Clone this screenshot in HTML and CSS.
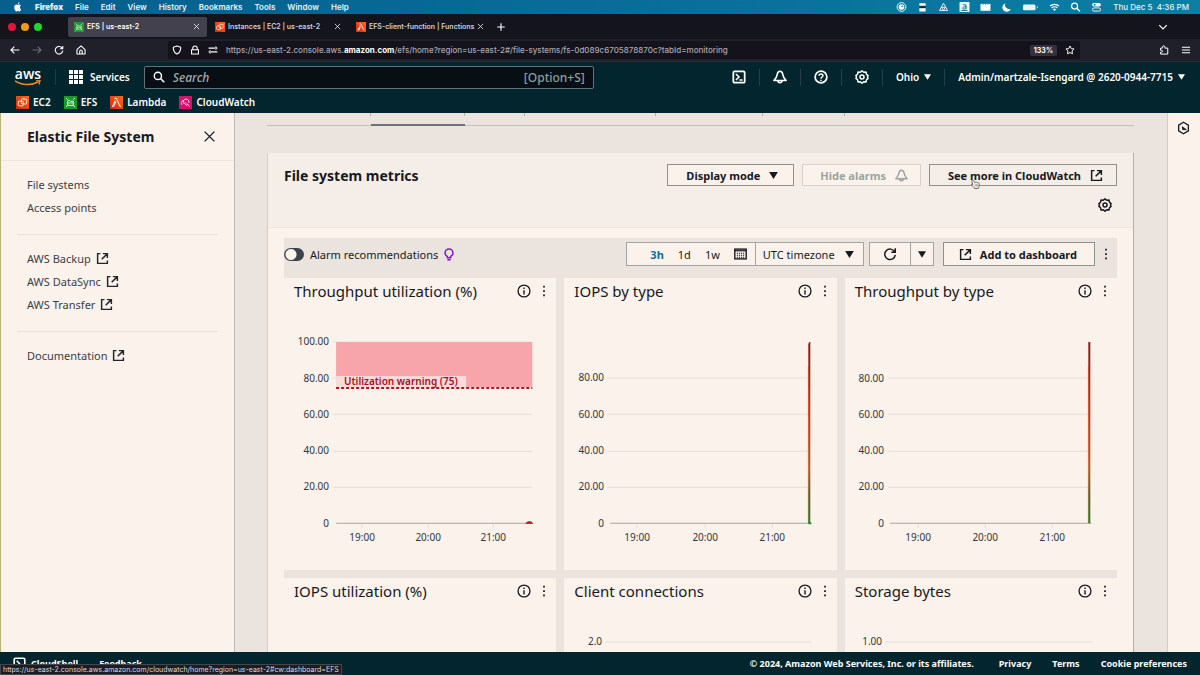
FILE: index.html
```html
<!DOCTYPE html>
<html lang="en">
<head>
    <meta charset="UTF-8">
    <meta name="viewport" content="width=device-width, initial-scale=1.0">
    <title>EFS | us-east-2</title>
    <link rel="stylesheet" href="styles.css">
</head>
<body>
    <!-- shared icons -->
    <svg class="sprite" aria-hidden="true">
        <defs>
            <linearGradient id="spike" x1="0" y1="0" x2="0" y2="1">
                <stop offset="0" stop-color="#8c1a12"/>
                <stop offset="0.4" stop-color="#c2321c"/>
                <stop offset="0.7" stop-color="#b5582c"/>
                <stop offset="0.85" stop-color="#5c5a2c"/>
                <stop offset="1" stop-color="#2c7a2c"/>
            </linearGradient>
            <linearGradient id="orange" x1="0" y1="1" x2="1" y2="0">
                <stop offset="0" stop-color="#d6250c"/>
                <stop offset="1" stop-color="#ff6a1c"/>
            </linearGradient>
        </defs>
        <symbol id="ext" viewBox="0 0 16 16"><path d="M5.500 2H2v12h12v-3.500M8.500 2H14v5.500M14 2 7 9" fill="none" stroke="currentColor" stroke-width="1.800"/></symbol>
        <symbol id="caret" viewBox="0 0 10 8"><path d="M0 0h10L5 8z" fill="currentColor"/></symbol>
        <symbol id="close" viewBox="0 0 16 16"><path d="M2 2l12 12M14 2 2 14" fill="none" stroke="currentColor" stroke-width="1.700"/></symbol>
        <symbol id="bell" viewBox="0 0 16 16"><path d="M8 1.500c-2.500 0-3 2-3.300 4C4.300 8.500 3.500 9.500 1 12h14c-2.500-2.500-3.300-3.500-3.700-6.500-.3-2-.8-4-3.300-4zM5.500 12a2.500 2.500 0 0 0 5 0" fill="none" stroke="currentColor" stroke-width="1.800" stroke-linejoin="round"/></symbol>
        <symbol id="gear" viewBox="0 0 16 16"><path d="M8 1l2 1.600 2.600-.2.500 2.500L15 6.500 14.200 8l.8 1.500-1.900 1.600-.5 2.500-2.600-.2L8 15l-2-1.600-2.600.2-.5-2.500L1 9.500 1.800 8 1 6.500l1.900-1.600.5-2.500 2.600.2z" fill="none" stroke="currentColor" stroke-width="1.700" stroke-linejoin="round"/><circle cx="8" cy="8" r="2.300" fill="none" stroke="currentColor" stroke-width="1.700"/></symbol>
        <symbol id="info" viewBox="0 0 16 16"><circle cx="8" cy="8" r="6.800" fill="none" stroke="currentColor" stroke-width="1.500"/><path d="M8 7v5M8 4v1.700" stroke="currentColor" stroke-width="1.600"/></symbol>
        <symbol id="dots" viewBox="0 0 4 16"><path d="M1 2h2v2H1zM1 7h2v2H1zM1 12h2v2H1z" fill="currentColor"/></symbol>
        <symbol id="shell" viewBox="0 0 16 16"><rect x="1.500" y="1.500" width="13" height="13" rx="1.500" fill="none" stroke="currentColor" stroke-width="2"/><path d="M4.500 4.500 8 8l-3.500 3.500M8.500 11.500h3.500" fill="none" stroke="currentColor" stroke-width="1.800"/></symbol>
        <symbol id="reload" viewBox="0 0 16 16"><path d="M14 1.500V6H9.500M13.300 5.500A6 6 0 1 0 14 9" fill="none" stroke="currentColor" stroke-width="1.700"/></symbol>
        <symbol id="search" viewBox="0 0 16 16"><circle cx="6.500" cy="6.500" r="4.800" fill="none" stroke="currentColor" stroke-width="1.900"/><path d="M10 10l5 5" stroke="currentColor" stroke-width="2.200"/></symbol>
        <symbol id="ec2" viewBox="0 0 16 16"><rect width="16" height="16" fill="url(#orange)"/><g fill="none" stroke="#fff" stroke-width="1" transform="rotate(8 8 8)"><rect x="3" y="6.500" width="6" height="6" rx="1"/><rect x="6.500" y="3.500" width="6.500" height="6" rx="1"/></g></symbol>
        <symbol id="efs" viewBox="0 0 16 16"><rect width="16" height="16" fill="#1b9a2b"/><path d="M2.500 2.500l2.500 2.500M13.500 2.500 11 5M2.500 13.500 5 11M13.500 13.500 11 11M5 5.500h2l1 1h3.500v5h-7v-5zM4.500 8.500h7" fill="none" stroke="#fff" stroke-width="1"/></symbol>
        <symbol id="lambda" viewBox="0 0 16 16"><rect width="16" height="16" fill="url(#orange)"/><path d="M5.500 3h2.500l4 9.500H13.500M7.300 7 4.500 13H3l3.500-7.500" fill="none" stroke="#fff" stroke-width="1.200"/></symbol>
        <symbol id="cw" viewBox="0 0 16 16"><rect width="16" height="16" fill="#d6106c"/><path d="M12 8.500A3.500 3.500 0 1 0 6 9.500M3.500 11C2.500 9 3 6.500 5 5M9.500 9l3.500 4M8 7.500a2 2 0 1 0 3 2.500" fill="none" stroke="#fff" stroke-width="1"/></symbol>
    </svg>

    <div class="menubar">
        <svg class="apple" viewBox="0 0 14 16"><path d="M10 8.500c0-2 1.600-2.800 1.700-2.900C10.700 4.200 9.300 4 8.700 4c-1 0-1.500.6-2 .6S5.300 4 4.500 4C2.600 4 1 5.600 1 8.600 1 11.800 3.200 15 4.600 15c.8 0 1.200-.5 2.200-.5s1.300.5 2.100.5c1.300 0 2.700-2.300 3.100-3.500-1.300-.5-2-1.600-2-3zM8.500 2.700C9 2 9.300 1.200 9.200.5c-1.400.1-2.600 1.300-2.500 3 .8 0 1.400-.3 1.800-.8z" fill="#fff"/></svg>
        <b>Firefox</b><span>File</span><span>Edit</span><span>View</span><span>History</span><span>Bookmarks</span><span>Tools</span><span>Window</span><span>Help</span>
        <div class="tray">
            <svg viewBox="0 0 16 16"><circle cx="8" cy="8" r="7" fill="none" stroke="#fff" stroke-width="1.500"/><circle cx="8" cy="8" r="4.500" fill="#fff"/><circle cx="9" cy="7" r="1.300" fill="#0b6b96"/></svg>
            <svg viewBox="0 0 16 16"><path d="M3 2h10v4H3zM3 10h10v5H3z" fill="#fff"/><path d="M3 8h10" stroke="#032b40" stroke-width="3"/></svg>
            <svg viewBox="0 0 16 16"><path d="M8 2 1.500 13.500h13zM5 8.500h6M5 8.500l3 5 3-5" fill="none" stroke="#fff" stroke-width="1.400"/></svg>
            <svg viewBox="0 0 16 16"><rect width="16" height="16" rx="1" fill="#e8f3f8"/><path d="M5.500 5c2-1.500 5-1 5 1v5M10.500 7.500c-6-.5-6.500 4-3 4 1.500 0 3-1 3-2.500M3 13.500h10" fill="none" stroke="#0b6b96" stroke-width="1.500"/></svg>
            <svg viewBox="0 0 16 16"><path d="M0 3h16v11H0z" fill="#fff"/><path d="M4 3v2M8 3v2M12 3v2" stroke="#0b6b96"/></svg>
            <svg viewBox="0 0 16 16"><path d="M6 2a7 7 0 1 0 9 9A7 7 0 0 1 6 2z" fill="#fff"/></svg>
            <svg class="wide" viewBox="0 0 26 16"><rect x="1" y="4" width="20" height="9" rx="2" fill="#e6f4fa"/><path d="M24 7v3" stroke="#9fd0e6" stroke-width="2"/></svg>
            <svg viewBox="0 0 16 16"><path d="M1 6.500a10 10 0 0 1 14 0M3.500 9.500a6.500 6.500 0 0 1 9 0" fill="none" stroke="#fff" stroke-width="2"/><path d="M5.500 11.500 8 14.500l2.500-3a4 4 0 0 0-5 0z" fill="#fff"/></svg>
            <svg><use href="#search"/></svg>
            <svg viewBox="0 0 16 16"><rect x="1" y="1.500" width="14" height="5.500" rx="2.700" fill="#fff"/><rect x="1.500" y="9.500" width="13" height="5" rx="2.500" fill="none" stroke="#fff" stroke-width="1.400"/><circle cx="5" cy="4.300" r="1.600" fill="#0b7aa3"/></svg>
            <span class="clock">Thu Dec 5&nbsp; 4:36 PM</span>
        </div>
    </div>

    <div class="tabstrip">
        <div class="lights"><i class="red"></i><i class="yellow"></i><i class="green"></i></div>
        <div class="tab active"><svg class="fav"><use href="#efs"/></svg><span>EFS | us-east-2</span><button aria-label="Close tab"><svg><use href="#close"/></svg></button></div>
        <div class="tab"><svg class="fav"><use href="#ec2"/></svg><span>Instances | EC2 | us-east-2</span><button aria-label="Close tab"><svg><use href="#close"/></svg></button></div>
        <div class="tab"><svg class="fav"><use href="#lambda"/></svg><span>EFS-client-function | Functions</span><button aria-label="Close tab"><svg><use href="#close"/></svg></button></div>
        <button class="new-tab" aria-label="New tab"><svg viewBox="0 0 16 16"><path d="M8 2v12M2 8h12" stroke="#fff" stroke-width="1.800"/></svg></button>
        <button class="all-tabs" aria-label="List all tabs"><svg viewBox="0 0 16 16"><path d="M2 5l6 6 6-6" fill="none" stroke="#fff" stroke-width="2"/></svg></button>
    </div>

    <div class="navbar">
        <div class="nav-buttons">
            <button aria-label="Back"><svg viewBox="0 0 16 16"><path d="M15 8H2M7 2.500 1.500 8 7 13.500" fill="none" stroke="#fff" stroke-width="1.800"/></svg></button>
            <button aria-label="Forward"><svg viewBox="0 0 16 16"><path d="M1 8h13M9 2.500 14.500 8 9 13.500" fill="none" stroke="#6b6a75" stroke-width="1.800"/></svg></button>
            <button aria-label="Reload"><svg><use href="#reload"/></svg></button>
            <button aria-label="Home"><svg viewBox="0 0 16 16"><path d="M1.500 7.500 8 1.500l6.500 6V14.500h-13zM6 14v-4a2 2 0 0 1 4 0v4" fill="none" stroke="#fff" stroke-width="1.700" stroke-linejoin="round"/></svg></button>
        </div>
        <div class="urlbar">
            <svg viewBox="0 0 16 16"><path d="M8 1.500 14 3.500c0 6-2 9-6 11-4-2-6-5-6-11z" fill="none" stroke="#fff" stroke-width="1.700" stroke-linejoin="round"/></svg>
            <svg viewBox="0 0 16 16"><path d="M2.500 7.500h11v7h-11zM4.500 7V5a3.500 3.500 0 0 1 7 0v2" fill="none" stroke="#fff" stroke-width="1.700"/></svg>
            <svg viewBox="0 0 16 16"><path d="M1 5h9M6 11h9" stroke="#fff" stroke-width="1.800"/><circle cx="12.500" cy="5" r="1.800" fill="none" stroke="#fff" stroke-width="1.500"/><circle cx="3.500" cy="11" r="1.800" fill="none" stroke="#fff" stroke-width="1.500"/></svg>
            <span class="url">https://us-east-2.console.aws.<b>amazon.com</b>/efs/home?region=us-east-2#/file-systems/fs-0d089c6705878870c?tabId=monitoring</span>
            <span class="zoom">133%</span>
            <svg viewBox="0 0 16 16"><path d="M8 1.500l2 4.200 4.500.6-3.300 3.200.8 4.600L8 12l-4 2.100.8-4.600L1.500 6.300 6 5.700z" fill="none" stroke="#fff" stroke-width="1.500" stroke-linejoin="round"/></svg>
        </div>
        <button aria-label="Extensions"><svg viewBox="0 0 16 16"><path d="M5.500 5V3.500a2 2 0 0 1 4 0V5H14v9.500H2.500v-3H4a1.500 1.500 0 0 0 0-3H2.500V5z" fill="none" stroke="#fff" stroke-width="1.600" stroke-linejoin="round"/></svg></button>
        <button aria-label="Menu"><svg viewBox="0 0 16 16"><path d="M1.500 3.500h13M1.500 8h13M1.500 12.500h13" stroke="#fff" stroke-width="1.700"/></svg></button>
    </div>

    <header class="aws-header">
        <div class="aws-row">
            <div class="aws-logo"><b>aws</b><svg viewBox="0 0 28 6"><path d="M1 .8c7 4.700 17 4.700 23.500 1" fill="none" stroke="#f08a24" stroke-width="1.600"/><path d="M22 .8l4-.1-1 4" fill="none" stroke="#f08a24" stroke-width="1.300"/></svg></div>
            <i class="sep"></i>
            <button class="services"><svg viewBox="0 0 14 14"><path d="M0 0h4v4H0zM5 0h4v4H5zM10 0h4v4h-4zM0 5h4v4H0zM5 5h4v4H5zM10 5h4v4h-4zM0 10h4v4H0zM5 10h4v4H5zM10 10h4v4h-4z" fill="#fff"/></svg>Services</button>
            <label class="searchbox"><svg><use href="#search"/></svg><input type="text" placeholder="Search" aria-label="Search"><span>[Option+S]</span></label>
            <nav class="tools">
                <button aria-label="CloudShell"><svg><use href="#shell"/></svg></button>
                <button aria-label="Notifications"><svg><use href="#bell"/></svg></button>
                <button aria-label="Help"><svg viewBox="0 0 16 16"><circle cx="8" cy="8" r="6.700" fill="none" stroke="#fff" stroke-width="2"/><path d="M5.800 6.500C5.800 3.800 10.200 3.800 10.200 6.500 10.200 8 8 8 8 10M8 11v1.600" fill="none" stroke="#fff" stroke-width="1.700"/></svg></button>
                <button aria-label="Settings"><svg><use href="#gear"/></svg></button>
                <button class="region">Ohio<svg class="caret"><use href="#caret"/></svg></button>
                <button class="account">Admin/martzale-Isengard @ 2620-0944-7715<svg class="caret"><use href="#caret"/></svg></button>
            </nav>
        </div>
        <nav class="favorites">
            <a href="#"><svg><use href="#ec2"/></svg>EC2</a>
            <a href="#"><svg><use href="#efs"/></svg>EFS</a>
            <a href="#"><svg><use href="#lambda"/></svg>Lambda</a>
            <a href="#"><svg><use href="#cw"/></svg>CloudWatch</a>
        </nav>
    </header>

    <div class="page">
        <aside class="sidebar">
            <div class="sidebar-title"><h2>Elastic File System</h2><button aria-label="Close navigation"><svg><use href="#close"/></svg></button></div>
            <ul>
                <li><a href="#">File systems</a></li>
                <li><a href="#">Access points</a></li>
            </ul>
            <ul>
                <li><a href="#">AWS Backup<svg><use href="#ext"/></svg></a></li>
                <li><a href="#">AWS DataSync<svg><use href="#ext"/></svg></a></li>
                <li><a href="#">AWS Transfer<svg><use href="#ext"/></svg></a></li>
            </ul>
            <ul>
                <li><a href="#">Documentation<svg><use href="#ext"/></svg></a></li>
            </ul>
        </aside>

        <main class="content">
            <!-- bottom edge of the details tabs, scrolled under the header -->
            <div class="detail-tabs"><i class="w1"></i><i class="w2 on"></i><i class="w3"></i><i class="w4"></i><i class="w5"></i><i class="w6"></i><i class="rest"></i></div>

            <section class="card">
                <div class="card-header">
                    <h2>File system metrics</h2>
                    <div class="card-actions">
                        <div class="buttons">
                            <button class="btn menu">Display mode<svg class="caret"><use href="#caret"/></svg></button>
                            <button class="btn" disabled>Hide alarms<svg><use href="#bell"/></svg></button>
                            <button class="btn hover">See more in CloudWatch<svg><use href="#ext"/></svg>
                                <svg class="pointer" viewBox="0 0 16 16"><path d="M3 2.500c1-1 2 0 2.500 1L7 6c2-1 3 0 4-.2 1.500 0 2.500 1 2.500 2.500v2c0 2-1.500 2.500-1.500 4.200H6.500C6 12.500 3.500 11 2 9.500c-.6-1 .6-1.800 2-.8L2.500 4z" fill="#f5ede8" stroke="#555" stroke-width="1.200"/><path d="M7.500 8.500v3M9.500 8.500v3M11.300 8.500v3" stroke="#777" stroke-width="1"/></svg>
                            </button>
                        </div>
                        <button class="icon-btn" aria-label="Preferences"><svg><use href="#gear"/></svg></button>
                    </div>
                </div>

                <div class="metrics">
                    <div class="toolbar">
                        <label class="switch"><input type="checkbox" role="switch">Alarm recommendations</label>
                        <svg class="bulb" viewBox="0 0 12 16"><path d="M4 10.500C2 9.500 1.200 8 1.200 6a4.800 4.800 0 0 1 9.600 0c0 2-.8 3.500-2.800 4.500v1.500H4z" fill="none" stroke="#7d1fc0" stroke-width="1.900"/><path d="M4 14.500h4" stroke="#7d1fc0" stroke-width="2"/></svg>
                        <div class="group range">
                            <div class="times"><button class="on">3h</button><button>1d</button><button>1w</button><button aria-label="Custom range"><svg viewBox="0 0 16 14"><rect x="1" y="1" width="14" height="12" fill="none" stroke="currentColor" stroke-width="1.700"/><path d="M1 3h14" stroke="currentColor" stroke-width="1.500"/><path d="M3.500 6h9M3.500 8.500h9M3.500 11h9" stroke="currentColor" stroke-width="1.300" stroke-dasharray="1.500 1"/></svg></button></div>
                            <label class="tz"><select aria-label="Timezone"><option>UTC timezone</option></select><svg class="caret"><use href="#caret"/></svg></label>
                        </div>
                        <div class="group refresh">
                            <button aria-label="Refresh"><svg><use href="#reload"/></svg></button>
                            <button aria-label="Refresh options"><svg class="caret"><use href="#caret"/></svg></button>
                        </div>
                        <button class="btn add"><svg><use href="#ext"/></svg>Add to dashboard</button>
                        <button class="icon-btn more" aria-label="More"><svg class="dots"><use href="#dots"/></svg></button>
                    </div>

                    <div class="charts">
                        <article class="panel">
                            <div class="panel-title"><h3>Throughput utilization (%)</h3><button aria-label="Info"><svg><use href="#info"/></svg></button><button aria-label="Actions"><svg class="dots"><use href="#dots"/></svg></button></div>
                            <svg class="chart" viewBox="0 0 272 264">
                                <path class="grid" d="M49 36h199M49 72h199M49 108h199M49 145h199M49 181h199"/>
                                <rect x="52" y="36" width="196" height="45" fill="#f7a5aa"/>
                                <rect x="52" y="70" width="130" height="11" fill="#f8dcda"/>
                                <text class="warn" x="60" y="79">Utilization warning (75)</text>
                                <path d="M52 82h196" stroke="#b8141c" stroke-width="2" stroke-dasharray="3 2"/>
                                <path class="axis" d="M52 217h196"/><path class="grid" d="M78 218v4M144 218v4M209 218v4"/>
                                <path d="M242 217c1-2 5-2 6 0z" fill="#b8141c" stroke="#b8141c"/>
                                <g class="y"><text x="45" y="39">100.00</text><text x="45" y="76">80.00</text><text x="45" y="112">60.00</text><text x="45" y="148">40.00</text><text x="45" y="184">20.00</text><text x="45" y="221">0</text></g>
                                <g class="x"><text x="78" y="235">19:00</text><text x="144" y="235">20:00</text><text x="209" y="235">21:00</text></g>
                            </svg>
                        </article>
                        <article class="panel">
                            <div class="panel-title"><h3>IOPS by type</h3><button aria-label="Info"><svg><use href="#info"/></svg></button><button aria-label="Actions"><svg class="dots"><use href="#dots"/></svg></button></div>
                            <svg class="chart" viewBox="0 0 272 264">
                                <path class="grid" d="M43 72h202M43 108h202M43 145h202M43 181h202"/>
                                <path class="axis" d="M46 217h201"/><path class="grid" d="M73 218v4M141 218v4M208 218v4"/>
                                <path d="M244 217V60" stroke="#f3b56f" stroke-width="1"/>
                                <path d="M244 217V38l1-2h1v181z" fill="url(#spike)"/><path d="M244 217h3" stroke="#2c8a2c" stroke-width="2"/>
                                <g class="y"><text x="40" y="75">80.00</text><text x="40" y="112">60.00</text><text x="40" y="148">40.00</text><text x="40" y="184">20.00</text><text x="40" y="221">0</text></g>
                                <g class="x"><text x="73" y="235">19:00</text><text x="141" y="235">20:00</text><text x="208" y="235">21:00</text></g>
                            </svg>
                        </article>
                        <article class="panel">
                            <div class="panel-title"><h3>Throughput by type</h3><button aria-label="Info"><svg><use href="#info"/></svg></button><button aria-label="Actions"><svg class="dots"><use href="#dots"/></svg></button></div>
                            <svg class="chart" viewBox="0 0 272 264">
                                <path class="grid" d="M43 72h202M43 108h202M43 145h202M43 181h202"/>
                                <path class="axis" d="M45 217h201"/><path class="grid" d="M73 218v4M140 218v4M207 218v4"/>
                                <path d="M243 217V60" stroke="#f3b56f" stroke-width="1"/>
                                <path d="M243 217V36h2v181z" fill="url(#spike)"/>
                                <g class="y"><text x="39" y="76">80.00</text><text x="39" y="112">60.00</text><text x="39" y="148">40.00</text><text x="39" y="184">20.00</text><text x="39" y="221">0</text></g>
                                <g class="x"><text x="73" y="235">19:00</text><text x="140" y="235">20:00</text><text x="207" y="235">21:00</text></g>
                            </svg>
                        </article>
                        <article class="panel">
                            <div class="panel-title"><h3>IOPS utilization (%)</h3><button aria-label="Info"><svg><use href="#info"/></svg></button><button aria-label="Actions"><svg class="dots"><use href="#dots"/></svg></button></div>
                        </article>
                        <article class="panel">
                            <div class="panel-title"><h3>Client connections</h3><button aria-label="Info"><svg><use href="#info"/></svg></button><button aria-label="Actions"><svg class="dots"><use href="#dots"/></svg></button></div>
                            <svg class="chart" viewBox="0 0 272 264"><path class="grid" d="M41 36h206"/><g class="y"><text x="38" y="39">2.0</text></g></svg>
                        </article>
                        <article class="panel">
                            <div class="panel-title"><h3>Storage bytes</h3><button aria-label="Info"><svg><use href="#info"/></svg></button><button aria-label="Actions"><svg class="dots"><use href="#dots"/></svg></button></div>
                            <svg class="chart" viewBox="0 0 272 264"><path class="grid" d="M41 36h207"/><g class="y"><text x="37" y="39">1.00</text></g></svg>
                        </article>
                    </div>
                </div>
            </section>
        </main>

        <div class="rail"><button aria-label="Open tools"><svg viewBox="0 0 16 16"><path d="M8 1l6 3.500v7L8 15l-6-3.500v-7z" fill="none" stroke="currentColor" stroke-width="1.600"/><path d="M6.500 6.500 11.500 10 7 10z" fill="currentColor" stroke="currentColor"/></svg></button></div>
    </div>

    <footer class="footer">
        <a href="#"><svg><use href="#shell"/></svg>CloudShell</a>
        <a href="#">Feedback</a>
        <span class="copy">© 2024, Amazon Web Services, Inc. or its affiliates.</span>
        <a href="#">Privacy</a>
        <a href="#">Terms</a>
        <a href="#">Cookie preferences</a>
    </footer>
    <div class="status">https://us-east-2.console.aws.amazon.com/cloudwatch/home?region=us-east-2#cw:dashboard=EFS</div>
</body>
</html>
```
FILE: styles.css
```css
* {
    margin: 0;
    padding: 0;
    box-sizing: border-box;
}

body {
    height: 100vh;
    display: flex;
    flex-direction: column;
    overflow: hidden;
    background: #fbf2ec;
    color: #16191f;
    font-family: "Noto Sans", sans-serif;
    font-size: 12px;
}

button,
input,
select {
    font: inherit;
    color: inherit;
    background: none;
    border: none;
    outline: none;
}

button {
    display: inline-flex;
    align-items: center;
    justify-content: center;
    cursor: pointer;
}

a {
    color: inherit;
    text-decoration: none;
}

ul {
    list-style: none;
}

svg {
    flex: none;
    display: block;
}

.sprite {
    position: absolute;
    width: 0;
    height: 0;
}

.caret {
    width: 9px;
    height: 7px;
}

/* mac menu bar */
.menubar {
    display: flex;
    align-items: center;
    gap: 12px;
    height: 14px;
    padding: 0 11px 0 13px;
    background: linear-gradient(to right, #065f8d, #0a6f9b 60%, #0b80a3);
    color: #e9f4f9;
    font: 600 8px Inter, sans-serif;
    white-space: nowrap;
}

.apple {
    width: 10px;
    height: 10px;
}

.tray {
    display: flex;
    align-items: center;
    gap: 10px;
    margin-left: auto;
}

.tray svg {
    width: 11px;
    height: 10px;
    color: #fff;
}

.tray .wide {
    width: 17px;
}

.clock {
    padding-left: 1px;
    font-weight: 500;
}

/* browser */
.tabstrip {
    display: flex;
    align-items: center;
    gap: 2px;
    height: 25px;
    padding: 0 32px 0 8px;
    background: #13141c;
    color: #cfcfd6;
    font: 600 7px Inter, sans-serif;
}

.lights {
    display: flex;
    gap: 5px;
    width: 58px;
}

.lights i {
    width: 8px;
    height: 8px;
    border-radius: 50%;
}

.red { background: #e6143c; }
.yellow { background: #f59a14; }
.green { background: #1fd62c; }

.tab {
    display: flex;
    align-items: center;
    gap: 3px;
    width: 139px;
    height: 20px;
    padding: 0 7px 0 6px;
    border-radius: 2px;
    white-space: nowrap;
}

.tab.active {
    background: #42414d;
    color: #fff;
}

.tab .fav {
    width: 10px;
    height: 10px;
}

.tab span {
    flex: 1;
}

.tab button svg {
    width: 7px;
    height: 7px;
    color: #fff;
}

.new-tab {
    margin-left: 5px;
}

.new-tab svg,
.all-tabs svg {
    width: 10px;
    height: 10px;
}

.all-tabs {
    margin-left: auto;
}

.navbar {
    display: flex;
    align-items: center;
    gap: 12px;
    height: 23px;
    padding: 0 9px;
    background: #1f2029;
    border-bottom: 1px solid #2c2a35;
    color: #fff;
}

.navbar svg {
    width: 10px;
    height: 10px;
}

.nav-buttons {
    display: flex;
    gap: 12px;
    width: 147px;
    padding-left: 1px;
}

.urlbar {
    display: flex;
    flex: 1;
    align-items: center;
    gap: 8px;
    height: 18px;
    margin-right: 67px;
    padding: 0 5px 0 4px;
    border-radius: 2px;
    background: #14131b;
}

.url {
    flex: 1;
    color: #a9a8b2;
    font: 500 8px Inter, sans-serif;
    white-space: nowrap;
}

.url b {
    color: #fff;
}

.zoom {
    padding: 1px 4px;
    border-radius: 2px;
    background: #35313f;
    font: 700 7px Inter, sans-serif;
}

/* aws header */
.aws-header {
    height: 51px;
    padding: 1px 14px 0 14px;
    background: #03252e;
    color: #fff;
    font-size: 10px;
    font-weight: 600;
}

.aws-row {
    display: flex;
    align-items: center;
    height: 28px;
}

.aws-logo {
    width: 28px;
    text-align: center;
    font: 600 14px/12px "Open Sans", sans-serif;
}

.aws-logo b {
    display: block;
    font-weight: 600;
}

.aws-logo svg {
    width: 28px;
    height: 6px;
}

.sep {
    width: 1px;
    height: 16px;
    margin: 0 13px;
    background: #1c3b45;
}

.services {
    gap: 7px;
}

.services svg {
    width: 14px;
    height: 14px;
}

.searchbox {
    display: flex;
    flex: 0 1 450px;
    align-items: center;
    gap: 8px;
    height: 23px;
    margin-left: 14px;
    padding: 0 8px;
    border: 1px solid #5f7378;
    border-radius: 2px;
    background: #070f15;
    font-size: 12px;
    font-weight: 500;
    color: #8f9e9e;
}

.searchbox svg {
    width: 12px;
    height: 12px;
    color: #fff;
}

.searchbox input {
    flex: 1;
    min-width: 0;
}

.searchbox input::placeholder {
    color: #a5abab;
    font-style: italic;
}

.tools {
    display: flex;
    align-items: center;
    margin-left: auto;
}

.tools button {
    height: 17px;
    padding: 0 13px;
    border-left: 1px solid #23404a;
    white-space: nowrap;
}

.tools button:first-child {
    border-left: none;
}

.tools svg {
    width: 14px;
    height: 14px;
}

.tools .caret {
    width: 7px;
    height: 6px;
    margin-left: 5px;
}

.tools .account {
    padding-right: 1px;
}

.favorites {
    display: flex;
    gap: 13px;
    height: 22px;
    padding-left: 2px;
}

.favorites a {
    display: flex;
    align-items: center;
    gap: 4px;
}

.favorites svg {
    width: 13px;
    height: 13px;
}

/* page */
.page {
    display: flex;
    flex: 1;
    min-height: 0;
    border-left: 1px solid #b9b37a;
}

.sidebar {
    width: 234px;
    border-right: 1px solid #b9bab5;
    color: #3a4048;
}

.sidebar-title {
    display: flex;
    align-items: center;
    justify-content: space-between;
    height: 48px;
    padding: 0 18px 0 26px;
    border-bottom: 1px solid #efe6e0;
    color: #16191f;
}

.sidebar h2 {
    font-size: 14px;
}

.sidebar-title svg {
    width: 13px;
    height: 13px;
}

.sidebar ul {
    margin: 0 16px;
    padding: 12px 10px 15px;
    border-bottom: 1px solid #ebe1dc;
}

.sidebar ul:last-child {
    border-bottom: none;
}

.sidebar li {
    height: 23px;
}

.sidebar a {
    display: inline-flex;
    align-items: center;
    gap: 5px;
    line-height: 23px;
    font-size: 11px;
}

.sidebar a svg {
    width: 13px;
    height: 13px;
    color: #22262c;
}

.content {
    flex: 1;
    min-width: 0;
    padding: 0 33px 0 32px;
    background: #ebe4de;
    overflow: hidden;
}

.detail-tabs {
    display: flex;
    height: 13px;
    margin-bottom: 27px;
}

.detail-tabs i {
    border-bottom: 1px solid #bfc3b2;
    background: linear-gradient(#b4b2ae, #b4b2ae) right top / 1px 3px no-repeat;
}

.detail-tabs .on {
    border-bottom: 2px solid #6d7376;
}

.detail-tabs .w1 { width: 104px; }
.detail-tabs .w2 { width: 94px; }
.detail-tabs .w3 { width: 60px; }
.detail-tabs .w4 { width: 131px; }
.detail-tabs .w5 { width: 107px; }
.detail-tabs .w6 { width: 82px; }

.detail-tabs .rest {
    flex: 1;
    background: none;
}

.card {
    border: 1px solid #d5cec9;
    border-top: none;
    border-right-color: #aeb1ad;
    background: #fbf2ec;
}

.card-header {
    display: flex;
    justify-content: space-between;
    height: 75px;
    padding: 11px 16px;
    border-bottom: 1px solid #efe6e0;
    background: #f5ede8;
}

.card-header h2 {
    font-size: 14px;
    line-height: 23px;
}

.card-actions {
    display: flex;
    flex-direction: column;
    align-items: flex-end;
    gap: 12px;
}

.buttons {
    display: flex;
    gap: 8px;
}

.btn {
    gap: 9px;
    height: 22px;
    padding: 0 12px 0 17px;
    border: 1px solid #8d9190;
    background: #fbf2ec;
    font-size: 11px;
    font-weight: 700;
    white-space: nowrap;
}

.btn svg {
    width: 13px;
    height: 13px;
}

.btn .caret {
    width: 9px;
    height: 7px;
}

.btn.menu {
    padding: 0 15px 0 18px;
}

.btn:disabled {
    border-color: #d8d0cb;
    color: #98a5a1;
}

.btn.hover {
    position: relative;
    padding: 0 13px 0 18px;
    background: #f5ede8;
}

.btn .pointer {
    position: absolute;
    left: 40px;
    top: 13px;
    width: 11px;
    height: 12px;
}

.icon-btn {
    padding: 0 5px;
}

.icon-btn svg {
    width: 14px;
    height: 14px;
}

.metrics {
    margin: 10px 16px 0;
    background: #ebe4de;
}

.toolbar {
    display: flex;
    height: 40px;
    padding: 4px 0 12px;
    font-size: 11px;
}

.switch {
    display: flex;
    align-items: center;
    gap: 6px;
}

.switch input {
    appearance: none;
    width: 20px;
    height: 13px;
    border-radius: 7px;
    background: radial-gradient(circle at 7px 50%, #fbf2ec 5px, #3d434b 6px);
}

.bulb {
    width: 10px;
    height: 13px;
    margin: 6px auto 0 6px;
}

.group {
    display: flex;
    border: 1px solid #a2a5a3;
    background: #fbf2ec;
}

.times {
    display: flex;
    gap: 14px;
    padding: 0 8px 0 23px;
}

.times .on {
    color: #0a6f9d;
    font-weight: 700;
}

.times svg {
    width: 13px;
    height: 12px;
}

.tz {
    display: flex;
    align-items: center;
    padding: 0 9px 0 7px;
    border-left: 1px solid #a2a5a3;
}

.tz select {
    appearance: none;
    padding-right: 10px;
}

.refresh {
    margin: 0 9px 0 5px;
}

.refresh button {
    width: 40px;
}

.refresh button + button {
    width: 23px;
    border-left: 1px solid #a2a5a3;
}

.refresh svg {
    width: 14px;
    height: 14px;
}

.refresh .caret {
    width: 8px;
    height: 7px;
}

.add {
    gap: 8px;
    height: 24px;
    padding: 0 17px 0 15px;
}

.more {
    padding: 0 9px;
}

.toolbar .dots,
.panel-title .dots {
    width: 4px;
    height: 14px;
}

.charts {
    display: grid;
    grid-template-columns: repeat(3, 1fr);
    gap: 8px;
}

.panel {
    min-height: 100px;
    background: #fbf2ec;
}

.panel-title {
    display: flex;
    align-items: center;
    gap: 11px;
    height: 28px;
    padding: 0 10px 2px;
}

.panel-title h3 {
    flex: 1;
    font-size: 15px;
    font-weight: 400;
    line-height: 20px;
}

.panel-title svg {
    width: 14px;
    height: 14px;
}

.chart {
    width: 100%;
    font-size: 10px;
    fill: #33373d;
}

.grid {
    stroke: #e6ddd8;
    fill: none;
}

.axis {
    stroke: #aba39f;
    fill: none;
}

.y { text-anchor: end; }
.x { text-anchor: middle; }

.warn {
    fill: #a80f1c;
    font-weight: 600;
}

.rail {
    width: 33px;
    padding: 8px 9px;
    border-left: 1px solid #d3ccc7;
}

.rail svg {
    width: 13px;
    height: 14px;
}

.footer {
    display: flex;
    align-items: center;
    gap: 21px;
    height: 23px;
    padding: 0 13px;
    background: #03252e;
    color: #fff;
    font-size: 9px;
    font-weight: 700;
    white-space: nowrap;
}

.footer a {
    display: flex;
    align-items: center;
    gap: 5px;
}

.footer svg {
    width: 13px;
    height: 13px;
}

.copy {
    margin: 0 4px 0 auto;
}

.status {
    position: fixed;
    left: 0;
    bottom: 0;
    height: 11px;
    padding: 0 2px;
    border: 1px solid #45474c;
    background: #1c1d22;
    color: #dcdce0;
    font: 400 7px/9px Inter, sans-serif;
}
```
